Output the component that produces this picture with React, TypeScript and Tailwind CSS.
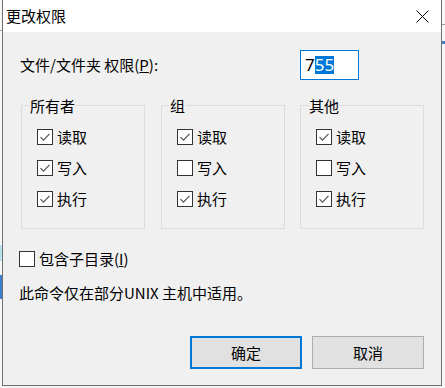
import React from 'react'

function CheckBox({ checked }: { checked: boolean }) {
  return (
    <span className="flex h-[16px] w-[16px] shrink-0 items-center justify-center border border-[#333333] bg-white">
      {checked && (
        <svg width="14" height="14" viewBox="0 0 14 14" fill="none" aria-hidden="true">
          <path d="M2.5 7.2 L5.5 10.2 L11.5 3.8" stroke="#555555" strokeWidth="1.2" />
        </svg>
      )}
    </span>
  )
}

function CheckRow({ label, checked, className = '' }: { label: string; checked: boolean; className?: string }) {
  return (
    <div className={`flex h-[16px] items-center ${className}`}>
      <CheckBox checked={checked} />
      <span className="ml-[4px] text-[15px] leading-[20px] text-black">{label}</span>
    </div>
  )
}

interface GroupProps {
  title: string
  read: boolean
  write: boolean
  exec: boolean
  className?: string
}

function PermGroup({ title, read, write, exec, className = '' }: GroupProps) {
  return (
    <div className={`relative h-[124px] w-[124px] border border-[#dcdcdc] pl-[15px] pt-[23px] ${className}`}>
      <span className="absolute left-[7px] top-[-10px] bg-[#f0f0f0] px-[1px] text-[15px] leading-[20px] text-black">
        {title}
      </span>
      <CheckRow label="读取" checked={read} />
      <CheckRow label="写入" checked={write} className="mt-[15px]" />
      <CheckRow label="执行" checked={exec} className="mt-[15px]" />
    </div>
  )
}

export default function App() {
  return (
    <div className="flex h-[388px] w-[445px] overflow-hidden bg-[#f3f3f3] font-['Noto_Sans_CJK_SC','Noto_Sans',sans-serif]">
      {/* sliver of the window behind, left */}
      <div className="flex w-[2px] flex-col bg-[#f7f7f7]">
        <div className="mt-[30px] h-[1px] bg-[#a0a0a0]" />
        <div className="mt-[214px] h-[16px] bg-[#b9e3ea]" />
        <div className="mt-[14px] h-[24px] bg-[#3b7fd0]" />
      </div>

      {/* dialog */}
      <div className="flex h-[386px] w-[440px] shrink-0 flex-col border-x border-b border-[#6f6f6f]">
        <div className="flex h-[32px] items-center justify-between bg-white pl-[3px] pr-[12px]">
          <span className="text-[15px] leading-[20px] text-black">更改权限</span>
          <svg width="13" height="13" viewBox="0 0 13 13" aria-hidden="true">
            <path d="M0.5 0.5 L12.5 12.5 M12.5 0.5 L0.5 12.5" stroke="#000" strokeWidth="1" />
          </svg>
        </div>

        <div className="flex flex-1 flex-col bg-[#f0f0f0] pl-[16px] pr-[17px]">
          <div className="mt-[18px] flex h-[30px] items-center">
            <span className="w-[281px] pl-[1px] text-[15px] leading-[20px] text-black">
              文件/文件夹 权限(<span className="underline">P</span>):
            </span>
            <div className="flex h-[30px] w-[59px] items-center border border-[#0078d7] bg-white pl-[4px] font-['Noto_Sans',sans-serif] text-[17px] leading-[18px]">
              <span className="text-black">7</span>
              <span className="bg-[#0078d7] text-white">55</span>
            </div>
          </div>

          <div className="mt-[25px] flex pl-[2px]">
            <PermGroup title="所有者" read write exec />
            <PermGroup title="组" read write={false} exec className="ml-[16px]" />
            <PermGroup title="其他" read write={false} exec className="ml-[15px]" />
          </div>

          <div className="mt-[22px] flex h-[16px] items-center">
            <CheckBox checked={false} />
            <span className="ml-[4px] text-[15px] leading-[20px] text-black">
              包含子目录(<span className="underline">I</span>)
            </span>
          </div>

          <div className="mt-[16px] text-[15px] leading-[20px] text-black">此命令仅在部分UNIX 主机中适用。</div>

          <div className="mt-[33px] flex justify-end gap-[10px]">
            <button className="h-[33px] w-[112px] border-2 border-[#0078d7] bg-[#e1e1e1] text-[15px] leading-[20px] text-black">
              确定
            </button>
            <button className="h-[33px] w-[112px] border border-[#adadad] bg-[#e1e1e1] text-[15px] leading-[20px] text-black">
              取消
            </button>
          </div>
        </div>
      </div>

      {/* sliver of the window behind, right */}
      <div className="flex flex-1 flex-col bg-[#f7f7f7]">
        <div className="mt-[24px] h-[1px] bg-[#9a9a9a]" />
        <div className="mt-[16px] h-[3px] bg-[#3b7fd0]" />
      </div>
    </div>
  )
}
